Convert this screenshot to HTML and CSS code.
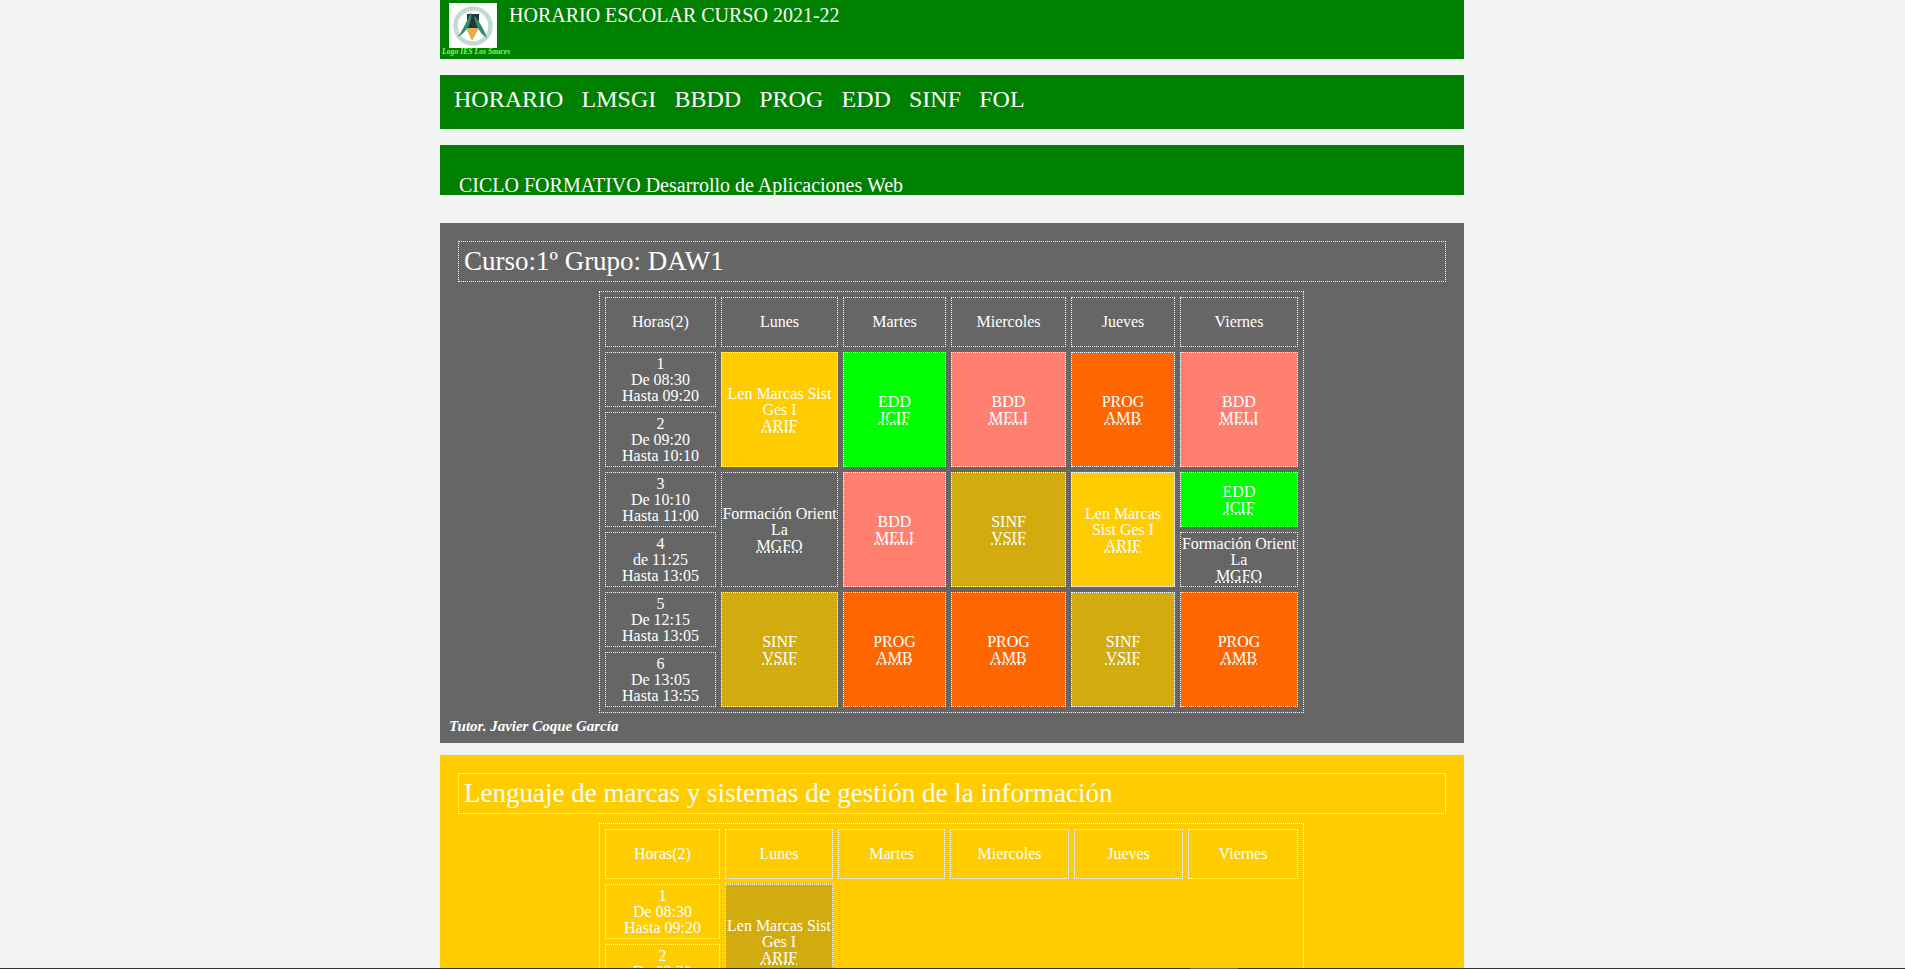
FILE: index.html
```html
<!DOCTYPE html>
<html lang="es">
<head>
	<meta charset="UTF-8">
	<title>Horario escolar</title>
	<link rel="stylesheet" href="styles.css">
</head>
<body>
	<div class="page">
		<header class="cabecera">
			<figure class="logo">
				<svg class="logo-img" viewBox="0 0 48 45" width="48" height="45" role="img" aria-label="Logo IES Los Sauces">
					<defs>
						<filter id="suave"><feGaussianBlur stdDeviation="0.6"/></filter>
					</defs>
					<rect width="48" height="45" fill="#fff"/>
					<g filter="url(#suave)">
						<circle cx="24" cy="23" r="17.5" fill="none" stroke="#c4dccf" stroke-width="4.5"/>
						<rect x="18" y="11" width="12" height="15" fill="#26343a"/>
						<path d="M17 25h13l-7 13z" fill="#e6ae4e"/>
						<path d="M9 34C14 26 18 18 22 9c2 9-4 20-13 25z" fill="#2f8f68"/>
						<path d="M38 35c-7-4-12-13-13-23 5 6 10 14 13 23z" fill="#2f8f68"/>
					</g>
				</svg>
				<figcaption>Logo IES Los Sauces</figcaption>
			</figure>
			<h1>HORARIO ESCOLAR CURSO 2021-22</h1>
		</header>

		<nav class="menu">
			<a href="#">HORARIO</a>
			<a href="#">LMSGI</a>
			<a href="#">BBDD</a>
			<a href="#">PROG</a>
			<a href="#">EDD</a>
			<a href="#">SINF</a>
			<a href="#">FOL</a>
		</nav>

		<div class="ciclo">
			<h2>CICLO FORMATIVO Desarrollo de Aplicaciones Web</h2>
		</div>

		<section class="bloque gris">
			<h3>Curso:1º Grupo: DAW1</h3>
			<table>
				<colgroup>
					<col class="c111"><col class="c117"><col class="c103"><col class="c115"><col class="c104"><col class="c118">
				</colgroup>
				<tr class="dias">
					<th>Horas(2)</th><th>Lunes</th><th>Martes</th><th>Miercoles</th><th>Jueves</th><th>Viernes</th>
				</tr>
				<tr>
					<td>1<br>De 08:30<br>Hasta 09:20</td>
					<td rowspan="2" class="lmsgi">Len Marcas Sist Ges I<br><abbr>ARIF</abbr></td>
					<td rowspan="2" class="edd">EDD<br><abbr>JCIF</abbr></td>
					<td rowspan="2" class="bbdd">BDD<br><abbr>MELI</abbr></td>
					<td rowspan="2" class="prog">PROG<br><abbr>AMB</abbr></td>
					<td rowspan="2" class="bbdd">BDD<br><abbr>MELI</abbr></td>
				</tr>
				<tr>
					<td>2<br>De 09:20<br>Hasta 10:10</td>
				</tr>
				<tr>
					<td>3<br>De 10:10<br>Hasta 11:00</td>
					<td rowspan="2">Formación Orient La<br><abbr>MGFO</abbr></td>
					<td rowspan="2" class="bbdd">BDD<br><abbr>MELI</abbr></td>
					<td rowspan="2" class="sinf">SINF<br><abbr>VSIF</abbr></td>
					<td rowspan="2" class="lmsgi">Len Marcas Sist Ges I<br><abbr>ARIF</abbr></td>
					<td class="edd">EDD<br><abbr>JCIF</abbr></td>
				</tr>
				<tr>
					<td>4<br>de 11:25<br>Hasta 13:05</td>
					<td>Formación Orient La<br><abbr>MGFO</abbr></td>
				</tr>
				<tr>
					<td>5<br>De 12:15<br>Hasta 13:05</td>
					<td rowspan="2" class="sinf">SINF<br><abbr>VSIF</abbr></td>
					<td rowspan="2" class="prog">PROG<br><abbr>AMB</abbr></td>
					<td rowspan="2" class="prog">PROG<br><abbr>AMB</abbr></td>
					<td rowspan="2" class="sinf">SINF<br><abbr>VSIF</abbr></td>
					<td rowspan="2" class="prog">PROG<br><abbr>AMB</abbr></td>
				</tr>
				<tr>
					<td>6<br>De 13:05<br>Hasta 13:55</td>
				</tr>
			</table>
			<p class="tutor">Tutor. Javier Coque García</p>
		</section>

		<section class="bloque amarillo">
			<h3>Lenguaje de marcas y sistemas de gestión de la información</h3>
			<table>
				<colgroup>
					<col class="c115"><col class="c108"><col class="c107"><col class="c119"><col class="c109"><col class="c110">
				</colgroup>
				<tr class="dias">
					<th>Horas(2)</th><th>Lunes</th><th>Martes</th><th>Miercoles</th><th>Jueves</th><th>Viernes</th>
				</tr>
				<tr>
					<td>1<br>De 08:30<br>Hasta 09:20</td>
					<td rowspan="2" class="sinf">Len Marcas Sist Ges I<br><abbr>ARIF</abbr></td>
					<td rowspan="2" class="vacia"></td>
					<td rowspan="2" class="vacia"></td>
					<td rowspan="2" class="vacia"></td>
					<td rowspan="2" class="vacia"></td>
				</tr>
				<tr>
					<td>2<br>De 09:20<br>Hasta 10:10</td>
				</tr>
			</table>
		</section>
	</div>
	<div class="barra"><span></span></div>
</body>
</html>
```

FILE: styles.css
```css
* {
	margin: 0;
	padding: 0;
	box-sizing: border-box;
}
html, body {
	height: 100%;
	overflow: hidden;
}
body {
	background-color: #f2f4f3;
	color: #fff;
	font-family: "Liberation Serif", "Times New Roman", serif;
	font-size: 16px;
}
.page {
	width: 1024px;
	margin-left: 440px;
}

/* cabecera */
.cabecera {
	height: 59px;
	background-color: green;
	display: flex;
	align-items: flex-start;
}
.logo {
	width: 69px;
	flex: none;
	padding: 3px 0 0 2px;
}
.logo-img {
	display: block;
	margin-left: 7px;
}
.logo figcaption {
	font-size: 7.7px;
	line-height: 8px;
	font-style: italic;
	font-weight: bold;
	color: #7dff55;
	white-space: nowrap;
}
.cabecera h1 {
	font-size: 20px;
	line-height: 23px;
	font-weight: normal;
	padding-top: 4px;
}

.menu {
	height: 54px;
	margin-top: 16px;
	background-color: green;
	padding: 10px 0 0 14px;
	display: flex;
	gap: 18.2px;
	font-size: 24px;
	line-height: 28px;
}
.menu a {
	color: #fff;
	text-decoration: none;
}

.ciclo {
	height: 50px;
	margin-top: 16px;
	background-color: green;
	padding: 29px 0 0 19px;
	overflow: hidden;
}
.ciclo h2 {
	font-size: 20px;
	line-height: 23px;
	font-weight: normal;
}

/* bloques de horario */
.bloque {
	padding: 18px 18px 0;
}
.gris {
	margin-top: 28px;
	height: 520px;
	background-color: #666;
}
.amarillo {
	margin-top: 12px;
	background-color: #fc0;
}
.bloque h3 {
	height: 41px;
	border: 1px dotted #fff;
	padding-left: 5px;
	font-size: 27px;
	line-height: 38px;
	font-weight: normal;
}
table {
	width: 705px;
	margin: 9px 0 0 141px;
	border: 1px dotted #fff;
	border-spacing: 5px;
	line-height: 16px;
	table-layout: fixed;
}
th, td {
	border: 1px dotted #fff;
	font-weight: normal;
	text-align: center;
	vertical-align: middle;
	height: 55px;
}
.dias th {
	height: 50px;
}
td.vacia {
	border: 0;
}
abbr {
	text-decoration: underline dotted;
}

/* anchos de columna */
.c103 { width: 103px; }
.c104 { width: 104px; }
.c107 { width: 107px; }
.c108 { width: 108px; }
.c109 { width: 109px; }
.c110 { width: 110px; }
.c111 { width: 111px; }
.c115 { width: 115px; }
.c117 { width: 117px; }
.c118 { width: 118px; }
.c119 { width: 119px; }

.lmsgi { background-color: #fc0; }
.edd { background-color: #0f0; }
.bbdd { background-color: #ff7f70; }
.prog { background-color: #f60; }
.sinf { background-color: #d2ac0f; }

.tutor {
	font-size: 15px;
	line-height: 16px;
	font-style: italic;
	font-weight: bold;
	margin: 5px 0 0 -9px;
}

.barra {
	position: fixed;
	left: 0;
	right: 0;
	bottom: 0;
	height: 1px;
	background-color: #333;
}
.barra span {
	display: block;
	width: 48px;
	height: 1px;
	margin-left: 1190px;
	background-color: #666;
}
```
